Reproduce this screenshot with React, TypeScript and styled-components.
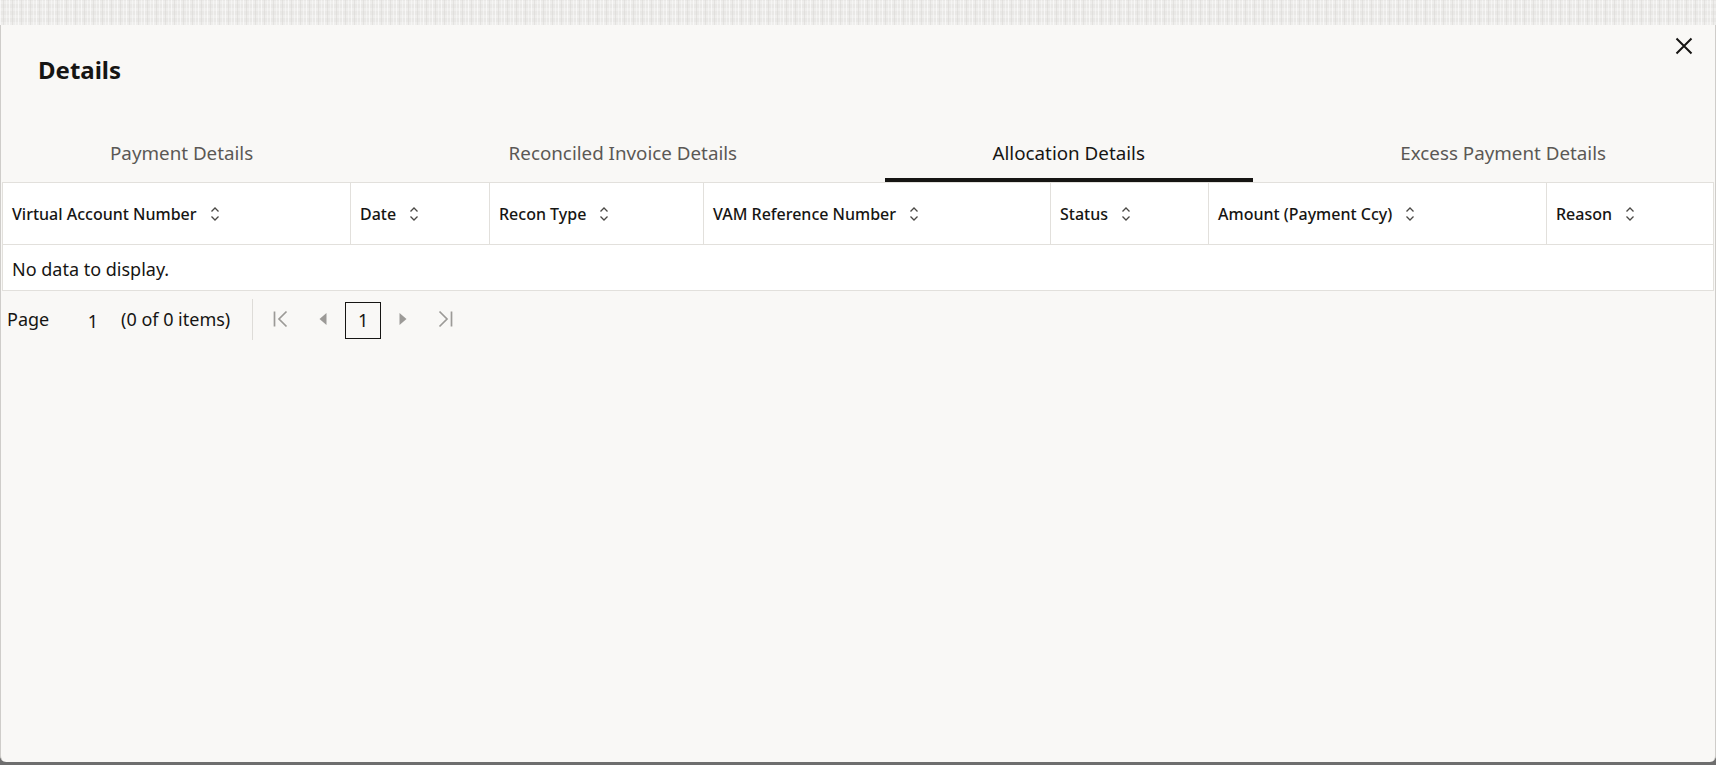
import React from "react";
import styled, { createGlobalStyle } from "styled-components";

const Global = createGlobalStyle`
  html, body { margin: 0; padding: 0; }
  body {
    font-family: "Noto Sans", "Liberation Sans", sans-serif;
    color: #161513;
    background: #6e6e6e;
  }
  * { box-sizing: border-box; }
`;

const Page = styled.div`
  width: 1716px;
  height: 765px;
  display: flex;
  flex-direction: column;
  overflow: hidden;
`;

const Backdrop = styled.div`
  height: 25px;
  flex: none;
  background-color: #e9e8e6;
  background-image:
    repeating-linear-gradient(90deg, rgba(255,255,255,0.6) 0 1px, transparent 1px 3px, rgba(214,212,209,0.45) 3px 4px, transparent 4px 6px, rgba(255,255,255,0.4) 6px 7px, transparent 7px 9px),
    repeating-linear-gradient(0deg, rgba(255,255,255,0.25) 0 3px, transparent 3px 7px);
`;

const Modal = styled.div`
  flex: 1;
  background: #f9f8f6;
  border-left: 1px solid #cfcdca;
  border-right: 1px solid #cfcdca;
  border-radius: 0 0 6px 6px;
  display: flex;
  flex-direction: column;
  position: relative;
  margin-bottom: 3px;
`;

const Header = styled.div`
  display: flex;
  align-items: flex-start;
  padding: 30px 0 0 37px;
  height: 102px;
`;

const Title = styled.h1`
  margin: 0;
  font-size: 24px;
  line-height: 30px;
  font-weight: 700;
  color: #161513;
`;

const CloseButton = styled.button`
  position: absolute;
  top: 3px;
  right: 13px;
  width: 36px;
  height: 36px;
  border: none;
  background: transparent;
  display: flex;
  align-items: center;
  justify-content: center;
  padding: 0;
  cursor: pointer;
  color: #161513;
`;

const TabBar = styled.div`
  display: flex;
  justify-content: space-between;
  height: 55px;
  padding: 0 1px;
`;

const Tab = styled.div<{ $active?: boolean }>`
  display: flex;
  align-items: center;
  justify-content: center;
  padding: 0 108px;
  font-size: 18.8px;
  line-height: 24px;
  color: ${(p) => (p.$active ? "#161513" : "#5b5855")};
  border-bottom: 4px solid ${(p) => (p.$active ? "#161513" : "transparent")};
  white-space: nowrap;
`;

const TableWrap = styled.div`
  padding: 0 1px;
`;

const Table = styled.div`
  border: 1px solid #e2e0dc;
  background: #ffffff;
`;

const HeadRow = styled.div`
  display: grid;
  grid-template-columns: 348px 139px 214px 347px 158px 338px 1fr;
  height: 62px;
  border-bottom: 1px solid #e2e0dc;
`;

const HeadCell = styled.div<{ $last?: boolean }>`
  display: flex;
  align-items: center;
  padding: 0 0 0 9px;
  font-size: 16px;
  font-weight: 500;
  color: #161513;
  border-right: ${(p) => (p.$last ? "none" : "1px solid #e2e0dc")};
  white-space: nowrap;
`;

const SortIcon = styled.svg`
  margin-left: 13px;
  flex: none;
`;

const EmptyRow = styled.div`
  height: 45px;
  display: flex;
  align-items: center;
  padding: 2px 0 0 9px;
  font-size: 18px;
  color: #161513;
`;

const Pager = styled.div`
  display: flex;
  align-items: center;
  height: 56px;
  padding-left: 6px;
  font-size: 18px;
  color: #161513;
`;

const PageLabel = styled.span`
  width: 64px;
`;

const PageInput = styled.span`
  width: 44px;
  text-align: center;
  padding-top: 4px;
`;

const ItemsLabel = styled.span`
  margin-left: 6px;
  white-space: nowrap;
`;

const Divider = styled.div`
  width: 1px;
  height: 41px;
  background: #dedcd8;
  margin: 0 7px 0 22px;
`;

const NavButton = styled.div`
  width: 42px;
  height: 37px;
  display: flex;
  align-items: center;
  justify-content: center;
  color: #9c9a97;
`;

const CurrentPage = styled.div`
  width: 36px;
  height: 37px;
  border: 1px solid #161513;
  display: flex;
  align-items: center;
  justify-content: center;
  font-size: 18px;
  margin: 2px 1px 0;
`;

const Sort = () => (
  <SortIcon width="10" height="16" viewBox="0 0 10 16" fill="none" stroke="#4a4845" strokeWidth="1.3">
    <path d="M1.5 5.5 L5 2 L8.5 5.5" />
    <path d="M1.5 10.5 L5 14 L8.5 10.5" />
  </SortIcon>
);

const columns = [
  "Virtual Account Number",
  "Date",
  "Recon Type",
  "VAM Reference Number",
  "Status",
  "Amount (Payment Ccy)",
  "Reason",
];

export default function App() {
  return (
    <>
      <Global />
      <Page>
        <Backdrop />
        <Modal>
          <Header>
            <Title>Details</Title>
          </Header>
          <CloseButton aria-label="Close">
            <svg width="18" height="18" viewBox="0 0 18 18" stroke="#161513" strokeWidth="2" fill="none">
              <path d="M1.5 1.5 L16.5 16.5 M16.5 1.5 L1.5 16.5" />
            </svg>
          </CloseButton>
          <TabBar>
            <Tab>Payment Details</Tab>
            <Tab>Reconciled Invoice Details</Tab>
            <Tab $active>Allocation Details</Tab>
            <Tab>Excess Payment Details</Tab>
          </TabBar>
          <TableWrap>
            <Table>
              <HeadRow>
                {columns.map((c, i) => (
                  <HeadCell key={c} $last={i === columns.length - 1}>
                    {c}
                    <Sort />
                  </HeadCell>
                ))}
              </HeadRow>
              <EmptyRow>No data to display.</EmptyRow>
            </Table>
          </TableWrap>
          <Pager>
            <PageLabel>Page</PageLabel>
            <PageInput>1</PageInput>
            <ItemsLabel>(0 of 0 items)</ItemsLabel>
            <Divider />
            <NavButton>
              <svg width="20" height="20" viewBox="0 0 20 20" fill="none" stroke="currentColor" strokeWidth="1.7">
                <path d="M3.5 2.5 L3.5 17.5" />
                <path d="M15.5 2.5 L8 10 L15.5 17.5" />
              </svg>
            </NavButton>
            <NavButton>
              <svg width="12" height="18" viewBox="0 0 12 18" fill="currentColor">
                <path d="M9.5 3 L2.5 9 L9.5 15 Z" />
              </svg>
            </NavButton>
            <CurrentPage>1</CurrentPage>
            <NavButton>
              <svg width="12" height="18" viewBox="0 0 12 18" fill="currentColor">
                <path d="M2.5 3 L9.5 9 L2.5 15 Z" />
              </svg>
            </NavButton>
            <NavButton>
              <svg width="20" height="20" viewBox="0 0 20 20" fill="none" stroke="currentColor" strokeWidth="1.7">
                <path d="M16.5 2.5 L16.5 17.5" />
                <path d="M4.5 2.5 L12 10 L4.5 17.5" />
              </svg>
            </NavButton>
          </Pager>
        </Modal>
      </Page>
    </>
  );
}
